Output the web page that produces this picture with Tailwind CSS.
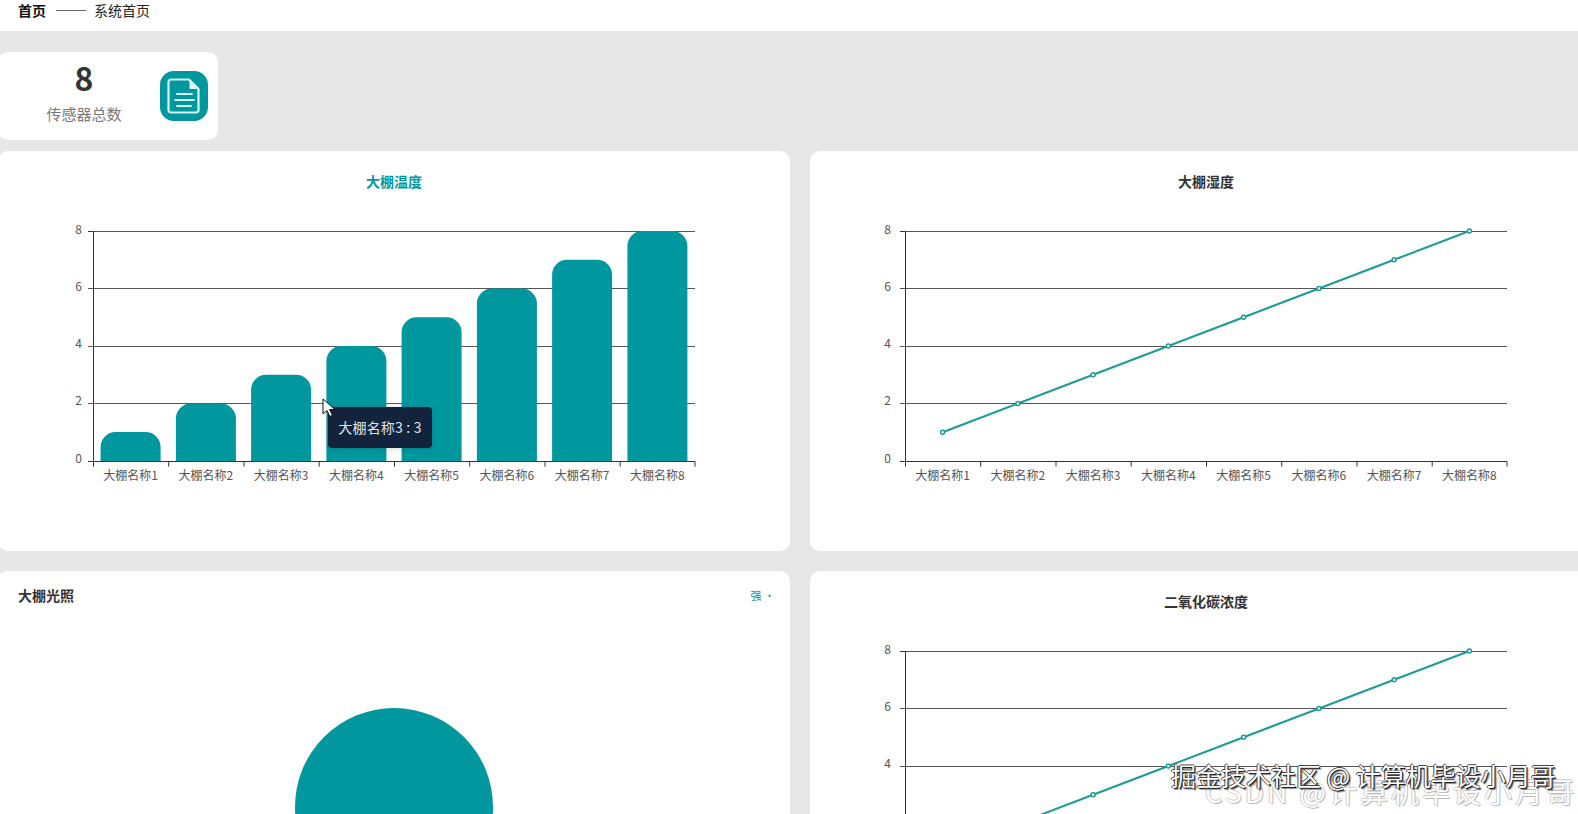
<!DOCTYPE html>
<html lang="zh">
<head>
<meta charset="utf-8">
<title>系统首页</title>
<script src="https://cdn.jsdelivr.net/npm/@tailwindcss/browser@4"></script>
</head>
<body class="m-0">
<div class="relative w-[1578px] h-[814px] overflow-hidden bg-[#e7e7e7] [font-family:'Noto_Sans_CJK_SC','Noto_Sans',sans-serif]">
  <header class="h-[31px] bg-white flex items-center pl-[18px] pb-[11px] text-[14px] leading-[20px] text-[#222]">
    <span class="font-bold text-[#111]">首页</span>
    <span class="w-[30px] h-px bg-[#666] ml-[10px] mr-[8px]"></span>
    <span>系统首页</span>
  </header>

  <div class="ml-[-2px] w-[1602px]">
    <section class="mt-[21px] w-[220px] h-[88px] bg-white rounded-[10px] flex items-center pl-[9px]">
      <div class="w-[154px] flex flex-col items-center mt-[-5px]">
        <span class="text-[32px] leading-[38px] font-bold text-[#333] mt-[-5px]">8</span>
        <span class="text-[15px] leading-[22px] text-[#777] mt-[7px]">传感器总数</span>
      </div>
      <div class="ml-[-1px] w-[48px] h-[50px] rounded-[14px] bg-[#00979f] flex items-center justify-center">
        <svg width="36" height="38" viewBox="0 0 36 38" fill="none" stroke="#d8f6f6" stroke-width="2.2" stroke-linejoin="round" stroke-linecap="round">
          <path d="M5 2.500h18l9.500 9.500v21a2.500 2.500 0 0 1-2.500 2.500H5a2.500 2.500 0 0 1-2.500-2.500V5A2.500 2.500 0 0 1 5 2.500z"/>
          <path d="M24 3.500v8h8" fill="#d8f6f6" stroke-width="1"/>
          <path d="M11 17h15M9 23h19M11 29h14" stroke-width="1.800"/>
        </svg>
      </div>
    </section>

    <div class="mt-[11px] grid grid-cols-[792px_792px] gap-[20px]">
      <!-- 大棚温度 -->
      <section class="relative h-[400px] bg-white rounded-[10px]">
        <h2 class="pt-[20px] h-[80px] text-center text-[14px] leading-[20px] font-bold text-[#00979f]">大棚温度</h2>
        <svg class="absolute left-0 top-0" width="792" height="400" viewBox="0 0 792 400" font-size="12">
          <g stroke="#555" stroke-width="1">
            <path d="M90 80.500H697M90 137.500H697M90 195.500H697M90 252.500H697"/>
          </g>
          <g fill="#00979f">
            <path d="M102.600 310V296a15 15 0 0 1 15-15h30a15 15 0 0 1 15 15v14z"/>
            <path d="M177.900 310V267.500a15 15 0 0 1 15-15h30a15 15 0 0 1 15 15V310z"/>
            <path d="M253.100 310V238.750a15 15 0 0 1 15-15h30a15 15 0 0 1 15 15V310z"/>
            <path d="M328.400 310V210a15 15 0 0 1 15-15h30a15 15 0 0 1 15 15V310z"/>
            <path d="M403.600 310V181.250a15 15 0 0 1 15-15h30a15 15 0 0 1 15 15V310z"/>
            <path d="M478.900 310V152.500a15 15 0 0 1 15-15h30a15 15 0 0 1 15 15V310z"/>
            <path d="M554.100 310V123.750a15 15 0 0 1 15-15h30a15 15 0 0 1 15 15V310z"/>
            <path d="M629.400 310V95a15 15 0 0 1 15-15h30a15 15 0 0 1 15 15V310z"/>
          </g>
          <path d="M90 80.500H95.500V310.500H697M90 310.500H95.500M95.500 310.500v5M170.700 310.500v5M246 310.500v5M321.200 310.500v5M396.500 310.500v5M471.700 310.500v5M547 310.500v5M622.200 310.500v5M697 310.500v5" stroke="#333" fill="none"/>
          <g fill="#555" text-anchor="end">
            <text x="84" y="83">8</text><text x="84" y="140">6</text><text x="84" y="197">4</text><text x="84" y="254">2</text><text x="84" y="312">0</text>
          </g>
          <g fill="#555" text-anchor="middle">
            <text x="132.600" y="329">大棚名称1</text><text x="207.900" y="329">大棚名称2</text><text x="283.100" y="329">大棚名称3</text><text x="358.400" y="329">大棚名称4</text><text x="433.600" y="329">大棚名称5</text><text x="508.900" y="329">大棚名称6</text><text x="584.100" y="329">大棚名称7</text><text x="659.400" y="329">大棚名称8</text>
          </g>
        </svg>
        <div class="absolute left-[330px] top-[256px] w-[104px] h-[41px] rounded-[4px] bg-[#14233c] text-[#dfe3e8] text-[14px] leading-[41px] text-center tracking-[0.2px] shadow-[0_1px_6px_rgba(0,0,0,0.15)]">大棚名称3 : 3</div>
        <svg class="absolute left-[324px] top-[247px]" width="14" height="20" viewBox="0 0 14 20">
          <path d="M1 1v15l4-3.500 2.800 6 2.600-1.200-2.800-5.800H13z" fill="#fff" stroke="#111" stroke-width="1"/>
        </svg>
      </section>

      <!-- 大棚湿度 -->
      <section class="relative h-[400px] bg-white rounded-[10px]">
        <h2 class="pt-[20px] h-[80px] text-center text-[14px] leading-[20px] font-bold text-[#333]">大棚湿度</h2>
        <svg class="absolute left-0 top-0" width="792" height="400" viewBox="0 0 792 400" font-size="12">
          <path d="M90 80.500H697M90 137.500H697M90 195.500H697M90 252.500H697" stroke="#555"/>
          <path d="M90 80.500H95.500V310.500H697M90 310.500H95.500M95.500 310.500v5M170.700 310.500v5M246 310.500v5M321.200 310.500v5M396.500 310.500v5M471.700 310.500v5M547 310.500v5M622.200 310.500v5M697 310.500v5" stroke="#333" fill="none"/>
          <g fill="#555" text-anchor="end">
            <text x="81" y="83">8</text><text x="81" y="140">6</text><text x="81" y="197">4</text><text x="81" y="254">2</text><text x="81" y="312">0</text>
          </g>
          <g fill="#555" text-anchor="middle">
            <text x="132.600" y="329">大棚名称1</text><text x="207.900" y="329">大棚名称2</text><text x="283.100" y="329">大棚名称3</text><text x="358.400" y="329">大棚名称4</text><text x="433.600" y="329">大棚名称5</text><text x="508.900" y="329">大棚名称6</text><text x="584.100" y="329">大棚名称7</text><text x="659.400" y="329">大棚名称8</text>
          </g>
          <polyline points="132.600,281.250 207.900,252.500 283.100,223.750 358.400,195 433.600,166.250 508.900,137.500 584.100,108.750 659.400,80" fill="none" stroke="#1a9c96" stroke-width="2"/>
          <g fill="#fff" stroke="#1a9c96" stroke-width="1.500">
            <circle cx="132.600" cy="281.250" r="2"/><circle cx="207.900" cy="252.500" r="2"/><circle cx="283.100" cy="223.750" r="2"/><circle cx="358.400" cy="195" r="2"/><circle cx="433.600" cy="166.250" r="2"/><circle cx="508.900" cy="137.500" r="2"/><circle cx="584.100" cy="108.750" r="2"/><circle cx="659.400" cy="80" r="2"/>
          </g>
        </svg>
      </section>

      <!-- 大棚光照 -->
      <section class="relative h-[400px] bg-white rounded-[10px]">
        <div class="flex justify-between items-center pl-[20px] pr-[15px] pt-[14px]">
          <h2 class="text-[14px] leading-[20px] font-bold text-[#333]">大棚光照</h2>
          <span class="text-[11px] leading-[20px] text-[#1a8f94]">强 ·</span>
        </div>
        <div class="mt-[103px] mx-auto w-[198px] h-[198px] rounded-full bg-[#00979f]"></div>
      </section>

      <!-- 二氧化碳浓度 -->
      <section class="relative h-[400px] bg-white rounded-[10px]">
        <h2 class="pt-[20px] h-[80px] text-center text-[14px] leading-[20px] font-bold text-[#333]">二氧化碳浓度</h2>
        <svg class="absolute left-0 top-0" width="792" height="400" viewBox="0 0 792 400" font-size="12">
          <path d="M90 80.500H697M90 137.500H697M90 195.500H697M90 252.500H697" stroke="#555"/>
          <path d="M90 80.500H95.500V310.500H697" stroke="#333" fill="none"/>
          <g fill="#555" text-anchor="end">
            <text x="81" y="83">8</text><text x="81" y="140">6</text><text x="81" y="197">4</text>
          </g>
          <polyline points="132.600,281.250 207.900,252.500 283.100,223.750 358.400,195 433.600,166.250 508.900,137.500 584.100,108.750 659.400,80" fill="none" stroke="#1a9c96" stroke-width="2"/>
          <g fill="#fff" stroke="#1a9c96" stroke-width="1.500">
            <circle cx="283.100" cy="223.750" r="2"/><circle cx="358.400" cy="195" r="2"/><circle cx="433.600" cy="166.250" r="2"/><circle cx="508.900" cy="137.500" r="2"/><circle cx="584.100" cy="108.750" r="2"/><circle cx="659.400" cy="80" r="2"/>
          </g>
        </svg>
      </section>
    </div>
  </div>

  <!-- 水印 -->
  <div class="absolute left-[1205px] top-[775px] whitespace-nowrap text-[28px] leading-[32px] tracking-[3px] text-[#fff] [text-shadow:1px_1px_0_#bbb,-1px_0_0_#ccc,0_-1px_0_#ccc]">CSDN @计算机毕设小月哥</div>
  <div class="absolute left-[1171px] top-[761px] whitespace-nowrap text-[25px] leading-[28px] text-[#fff] [text-shadow:1px_1px_0_#222,-1px_0_0_#444,0_-1px_0_#444,2px_2px_1px_#888]">掘金技术社区 @ 计算机毕设小月哥</div>
</div>
</body>
</html>
